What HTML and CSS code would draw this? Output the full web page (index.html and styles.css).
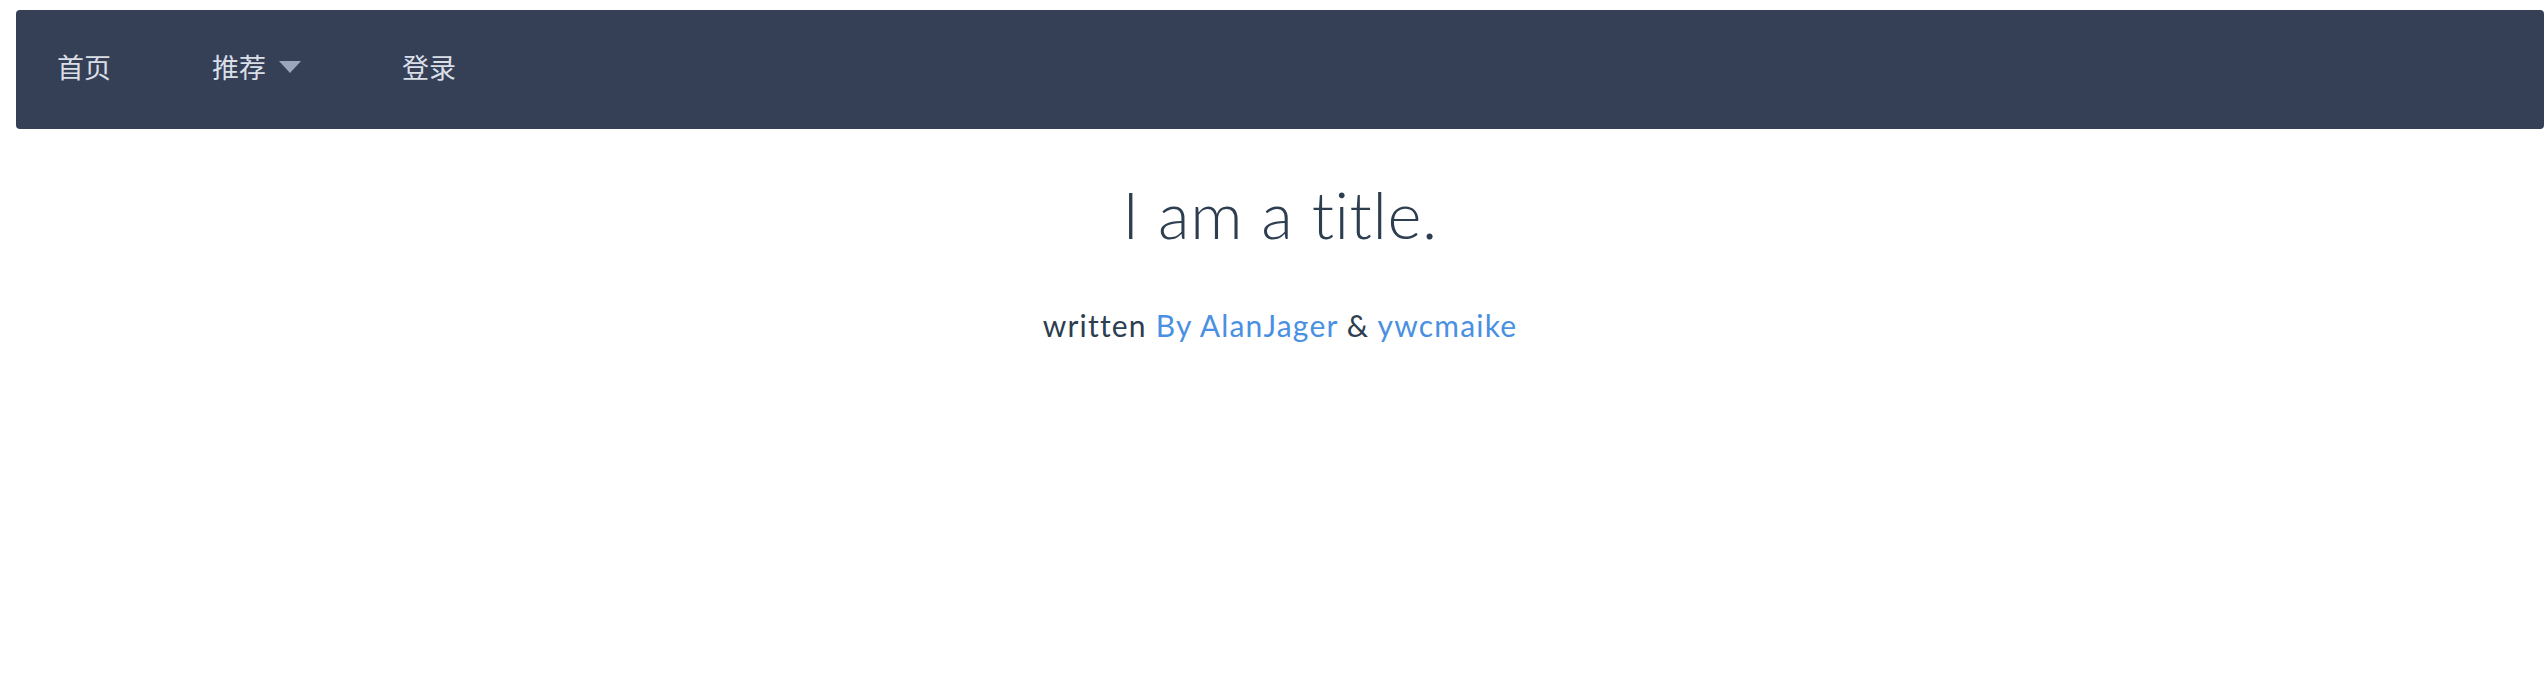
FILE: index.html
```html
<!DOCTYPE html>
<html lang="zh">
<head>
<meta charset="utf-8">
<title>I am a title.</title>
<link rel="stylesheet" href="styles.css">
</head>
<body>
<nav class="navbar">
  <ul class="nav-list">
    <li class="nav-item"><a href="#">首页</a></li>
    <li class="nav-item dropdown"><a href="#">推荐</a><span class="caret"></span></li>
    <li class="nav-item"><a href="#">登录</a></li>
  </ul>
</nav>
<main class="content">
  <h1 class="title">I am a title.</h1>
  <p class="byline">written <a href="#">By AlanJager</a> &amp; <a href="#">ywcmaike</a></p>
</main>
</body>
</html>
```

FILE: styles.css
```css
html, body {
  margin: 0;
  padding: 0;
  background: #ffffff;
}

body {
  padding: 10px 4px 0 16px;
  font-family: "Lato", "Noto Sans CJK SC", sans-serif;
  color: #2c3e50;
}

.navbar {
  height: 119px;
  box-sizing: border-box;
  padding-bottom: 6px;
  background: #354057;
  border-radius: 4px;
  display: flex;
  align-items: center;
}

.nav-list {
  list-style: none;
  margin: 0;
  padding: 0 0 0 41px;
  display: flex;
  align-items: center;
  gap: 101px;
}

.nav-item {
  display: flex;
  align-items: center;
  gap: 13px;
}

.nav-item a {
  color: #dadfe7;
  text-decoration: none;
  font-family: "Noto Sans CJK SC", sans-serif;
  font-size: 27px;
  line-height: 30px;
}

.caret {
  width: 0;
  height: 0;
  border-left: 11px solid transparent;
  border-right: 11px solid transparent;
  border-top: 12px solid #9aa6bc;
  margin-top: 1px;
}

.content {
  text-align: center;
}

.title {
  margin: 47px 0 0;
  font-size: 65px;
  line-height: 76px;
  font-weight: 300;
  letter-spacing: 0.6px;
  color: #2c3e50;
}

.byline {
  margin: 55px 0 0;
  font-size: 30px;
  line-height: 36px;
  letter-spacing: 1.2px;
  color: #2c3e50;
}

.byline a {
  color: #4a90e2;
  text-decoration: none;
}
```
